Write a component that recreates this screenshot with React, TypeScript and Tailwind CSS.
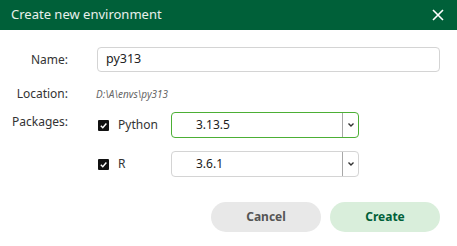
import React from "react";

function Check() {
  return (
    <div className="w-[11px] h-[11px] bg-[#111] rounded-[1px] flex items-center justify-center">
      <svg width="9" height="9" viewBox="0 0 10 10">
        <path d="M2 5.2 L4.2 7.4 L8.2 2.8" stroke="white" strokeWidth="1.6" fill="none" />
      </svg>
    </div>
  );
}

function Select({ value, active }: { value: string; active?: boolean }) {
  return (
    <div
      className={`w-[188px] h-[26px] rounded-[4px] border flex ${
        active ? "border-[#4caf35]" : "border-[#d4d4d4]"
      }`}
    >
      <div className="flex-1 pl-[24px] flex items-center text-[12px] text-[#222]">{value}</div>
      <div className="w-[16px] border-l border-[#a8a8a8] flex items-center justify-center">
        <svg width="8" height="6" viewBox="0 0 8 6">
          <path d="M1.5 1.5 L4 4 L6.5 1.5" stroke="#333" strokeWidth="1.4" fill="none" />
        </svg>
      </div>
    </div>
  );
}

export default function App() {
  return (
    <div
      className="w-[457px] h-[246px] bg-white"
      style={{ fontFamily: '"Noto Sans", "Open Sans", sans-serif' }}
    >
      <div className="h-[30px] bg-[#006039] flex items-center justify-between pl-[11px] pr-[13px]">
        <span className="text-[13px] text-[#e8f0ec]">Create new environment</span>
        <svg width="12" height="12" viewBox="0 0 12 12">
          <path d="M1 1 L11 11 M11 1 L1 11" stroke="white" strokeWidth="1.6" />
        </svg>
      </div>
      <div className="pt-[17px] pl-[0px] pr-[17px] text-[12px] text-[#333]">
        <div className="flex items-center h-[25px]">
          <div className="w-[68px] text-right">Name:</div>
          <div className="ml-[29px] flex-1 h-[25px] border border-[#d4d4d4] rounded-[4px] flex items-center pl-[8px] text-[12.5px] text-[#222]">
            py313
          </div>
        </div>
        <div className="flex items-center mt-[12px] h-[20px]">
          <div className="w-[68px] text-right">Location:</div>
          <div className="ml-[28px] italic text-[10px] text-[#666]">D:\A\envs\py313</div>
        </div>
        <div className="flex mt-[3px]">
          <div className="w-[68px] text-right pt-[6px]">Packages:</div>
          <div className="ml-[30px] flex flex-col gap-[13px] mt-[5px]">
            <div className="flex items-center">
              <Check />
              <span className="ml-[9px] w-[53px]">Python</span>
              <Select value="3.13.5" active />
            </div>
            <div className="flex items-center">
              <Check />
              <span className="ml-[9px] w-[53px]">R</span>
              <Select value="3.6.1" />
            </div>
          </div>
        </div>
        <div className="flex justify-end gap-[9px] mt-[25px]">
          <button className="w-[110px] h-[30px] rounded-full bg-[#e8e8e8] text-[12px] font-bold text-[#555]">
            Cancel
          </button>
          <button className="w-[110px] h-[30px] rounded-full bg-[#d9eedb] text-[12px] font-bold text-[#006039]">
            Create
          </button>
        </div>
      </div>
    </div>
  );
}
